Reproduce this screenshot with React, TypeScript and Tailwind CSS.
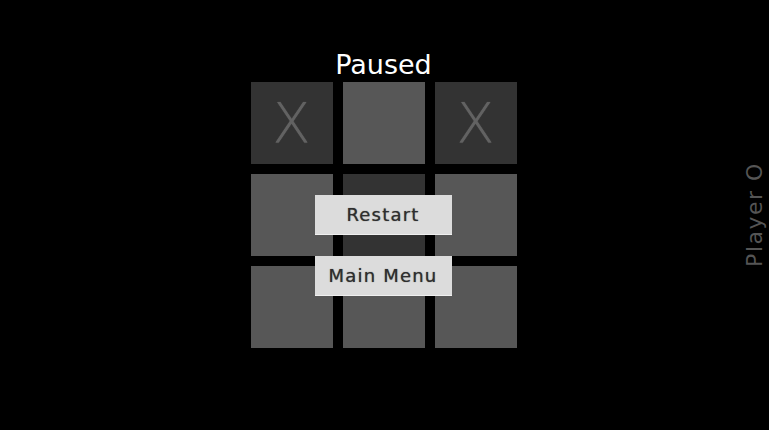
import React from "react";

const cells = ["X", "", "X", "", "", "", "", "", ""];
// darker squares: the taken ones plus the centre one
const dark = [0, 2, 4];

const App = () => {
  return (
    <div
      className="relative w-[769px] h-[430px] bg-black overflow-hidden"
      style={{ fontFamily: '"DejaVu Sans", "Liberation Sans", sans-serif' }}
    >
      <div className="flex flex-col items-center pt-[50px] pr-[2px]">
        <h1 className="text-[27px] leading-[30px] text-white mb-[2px]">Paused</h1>

        {/* Board */}
        <div className="relative">
          <div className="grid grid-cols-[82px_82px_82px] gap-[10px]">
            {cells.map((c, i) => (
              <div
                key={i}
                className={`flex items-center justify-center w-[82px] h-[82px] ${
                  dark.includes(i) ? "bg-[#333333]" : "bg-[#575757]"
                }`}
              >
                {c && (
                  <span className="text-[56px] leading-none font-extralight text-[#626262] [text-shadow:0_0_1px_#626262]">
                    {c}
                  </span>
                )}
              </div>
            ))}
          </div>

          {/* Pause menu */}
          <button className="absolute left-[64px] top-[113px] w-[137px] h-[39px] bg-[#dcdcdc] text-[#2e2e2e] text-[18px] tracking-[1.2px] shadow-[0_1px_0_#f0f0f0] [text-shadow:0_0_1px_#555555]">
            Restart
          </button>
          <button className="absolute left-[64px] top-[174px] w-[137px] h-[39px] bg-[#dcdcdc] text-[#2e2e2e] text-[18px] tracking-[1.2px] shadow-[0_1px_0_#f0f0f0] [text-shadow:0_0_1px_#555555]">
            Main Menu
          </button>
        </div>
      </div>

      {/* Turn label */}
      <div className="absolute right-[2px] top-[160px] h-[108px] w-[26px] flex items-center justify-center">
        <span className="-rotate-90 whitespace-nowrap text-[22px] tracking-[1.5px] text-[#555555]">
          Player O
        </span>
      </div>
    </div>
  );
};

export default App;
